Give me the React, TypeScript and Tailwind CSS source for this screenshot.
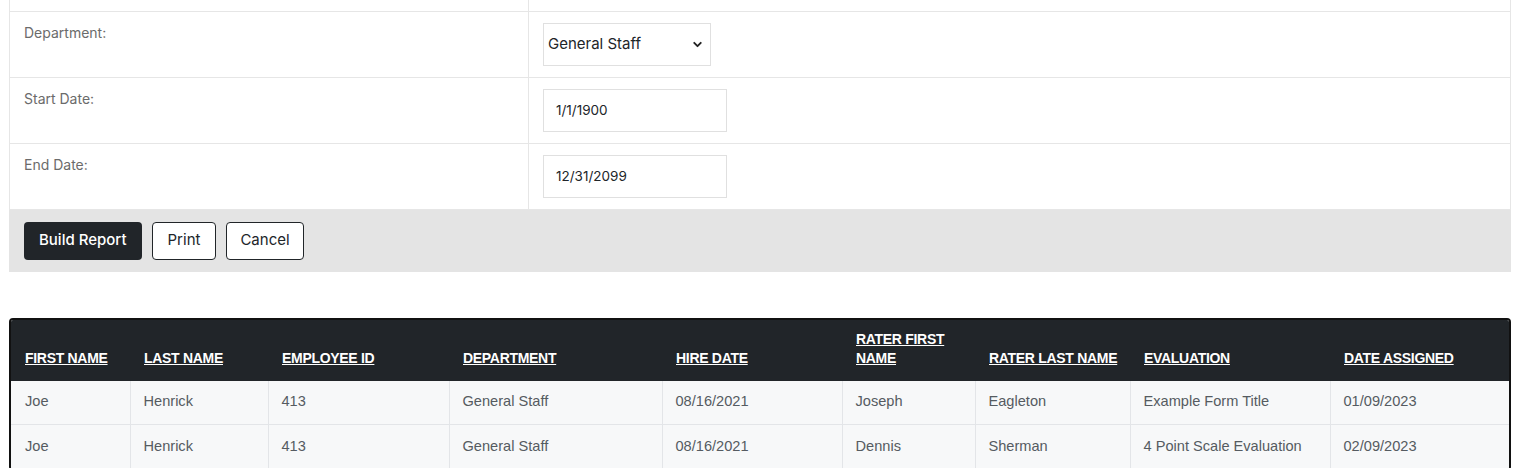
import { ChevronDown } from 'lucide-react';

const rows = [
  { first: 'Joe', last: 'Henrick', id: '413', dept: 'General Staff', hire: '08/16/2021', rFirst: 'Joseph', rLast: 'Eagleton', evalName: 'Example Form Title', assigned: '01/09/2023' },
  { first: 'Joe', last: 'Henrick', id: '413', dept: 'General Staff', hire: '08/16/2021', rFirst: 'Dennis', rLast: 'Sherman', evalName: '4 Point Scale Evaluation', assigned: '02/09/2023' },
];

const cols = [
  { label: 'FIRST NAME', w: 'w-[119px] whitespace-nowrap' },
  { label: 'LAST NAME', w: 'w-[138px] whitespace-nowrap' },
  { label: 'EMPLOYEE ID', w: 'w-[181px] whitespace-nowrap' },
  { label: 'DEPARTMENT', w: 'w-[213px] whitespace-nowrap' },
  { label: 'HIRE DATE', w: 'w-[180px] whitespace-nowrap' },
  { label: 'RATER FIRST NAME', w: 'w-[133px]' },
  { label: 'RATER LAST NAME', w: 'w-[155px] whitespace-nowrap' },
  { label: 'EVALUATION', w: 'w-[200px] whitespace-nowrap' },
  { label: 'DATE ASSIGNED', w: 'w-[181px] whitespace-nowrap' },
];

function FormRow({ label, children }: { label: string; children: React.ReactNode }) {
  return (
    <tr className="h-[66px] border-b border-[#e6e6e6]">
      <td className="w-[519px] border-r border-[#e6e6e6] px-[14px] pt-[10px] align-top text-[14px] text-[#6b6b6b]">{label}</td>
      <td className="px-[14px] pt-[11px] pb-[11px] align-top">{children}</td>
    </tr>
  );
}

export default function App() {
  return (
    <div className="min-h-screen bg-white pl-[9px] pr-[6px] font-['Inter',sans-serif]">
      {/* filter form */}
      <table className="w-full border-collapse border-x border-[#e6e6e6]">
        <tbody>
          <tr className="h-[11px] border-b border-[#e6e6e6]">
            <td className="w-[519px] border-r border-[#e6e6e6]"></td>
            <td></td>
          </tr>
          <FormRow label="Department:">
            <div className="flex h-[43px] w-[168px] items-center justify-between border border-[#e0e0e0] bg-white pl-[4px] pr-[6px] text-[15px] text-[#212529]">
              <span>General Staff</span>
              <ChevronDown className="h-[13px] w-[13px] text-[#222]" strokeWidth={3.5} />
            </div>
          </FormRow>
          <FormRow label="Start Date:">
            <div className="flex h-[43px] w-[184px] items-center border border-[#e0e0e0] bg-white px-[12px] text-[13.5px] text-[#212529]">1/1/1900</div>
          </FormRow>
          <FormRow label="End Date:">
            <div className="flex h-[43px] w-[184px] items-center border border-[#e0e0e0] bg-white px-[12px] text-[13.5px] text-[#212529]">12/31/2099</div>
          </FormRow>
        </tbody>
      </table>
      <div className="flex h-[62px] items-center gap-[10px] bg-[#e4e4e4] px-[15px] text-[15px]">
        <button className="h-[38px] rounded-[4px] bg-[#212529] px-[15px] font-medium text-white">Build Report</button>
        <button className="h-[38px] rounded-[4px] border border-[#212529] bg-white px-[15px] text-[#212529]">Print</button>
        <button className="h-[38px] rounded-[4px] border border-[#212529] bg-white px-[13px] text-[#212529]">Cancel</button>
      </div>

      {/* results */}
      <div className="mt-[46px] overflow-hidden rounded-[4px] border-2 border-[#111] font-['Liberation_Sans',Arial,sans-serif]">
        <table className="w-full table-fixed border-collapse">
          <thead>
            <tr className="h-[61px] bg-[#212529]">
              {cols.map((c) => (
                <th key={c.label} className={`${c.w} px-[14px] pb-[13px] align-bottom text-left text-[14px] font-bold leading-[19px] tracking-[-0.3px] text-white underline`}>
                  {c.label}
                </th>
              ))}
            </tr>
          </thead>
          <tbody>
            {rows.map((r, i) => (
              <tr key={i} className="h-[44px] border-b border-[#e3e5e8] bg-[#f7f8f9] text-[14.6px] text-[#555b61]">
                <td className="px-[14px]">{r.first}</td>
                <td className="border-l border-[#e3e5e8] px-[13px]">{r.last}</td>
                <td className="border-l border-[#e3e5e8] px-[13px]">{r.id}</td>
                <td className="border-l border-[#e3e5e8] px-[13px]">{r.dept}</td>
                <td className="border-l border-[#e3e5e8] px-[13px]">{r.hire}</td>
                <td className="border-l border-[#e3e5e8] px-[13px]">{r.rFirst}</td>
                <td className="border-l border-[#e3e5e8] px-[13px]">{r.rLast}</td>
                <td className="border-l border-[#e3e5e8] px-[13px]">{r.evalName}</td>
                <td className="border-l border-[#e3e5e8] px-[13px]">{r.assigned}</td>
              </tr>
            ))}
          </tbody>
        </table>
      </div>
    </div>
  );
}
